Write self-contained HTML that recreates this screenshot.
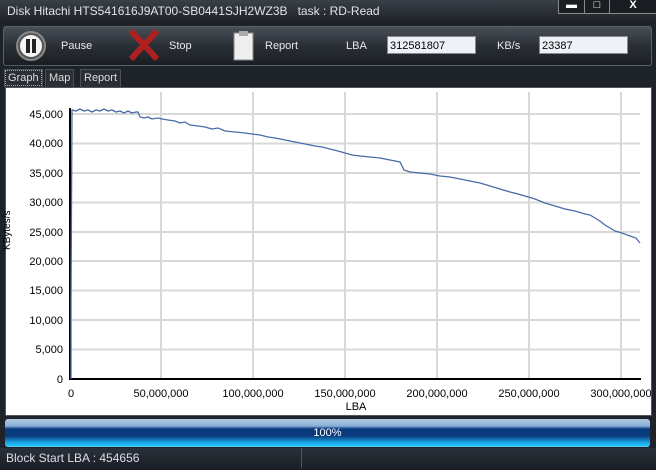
<!DOCTYPE html>
<html><head><style>
body{margin:0;width:656px;height:470px;overflow:hidden;background:#1e2329;font-family:"Liberation Sans",sans-serif;}
.title{position:absolute;left:0;top:0;width:656px;height:24px;background:linear-gradient(#3a4048,#1c2026);color:#dfe3e8;font-size:12px;}
.title span{position:absolute;left:7px;top:4px;}
.wb{position:absolute;top:-1px;height:14px;border:1px solid #888;border-top:none;background:#1a1d22;color:#fff;font-size:11px;text-align:center;line-height:12px;font-weight:bold}
.tool{position:absolute;left:3px;top:26px;width:647px;height:38px;border:1px solid #5a6068;border-radius:3px;background:linear-gradient(#4a5058,#2a2f36 50%,#1a1e24);}
.t{position:absolute;color:#e8e8e8;font-size:11px}
.inp{position:absolute;top:36px;height:18px;background:#eef2f8;border:1px solid #888;font-size:11px;line-height:18px;padding-left:2px;color:#000;box-sizing:border-box}
.tab{position:absolute;top:69px;height:17px;background:#2a2f36;border:1px solid #4a5058;color:#ddd;font-size:11px;line-height:16px;padding:0 3px;border-bottom:none}
.panel{position:absolute;left:5px;top:87px;width:645px;height:327px;background:#fff;border:1px solid #555}
.bar{position:absolute;left:5px;top:419px;width:645px;height:28px;border-radius:3px;background:linear-gradient(#b0c8e0 0%,#8ab0d8 25%,#0a3a80 35%,#0a3a7a 60%,#1aa8e8 85%,#20c0f8 95%,#6ad0f0);color:#fff;font-size:11px;text-align:center;line-height:28px}
.status{position:absolute;left:0;top:448px;width:656px;height:22px;background:linear-gradient(#2a3038,#1a1e24);color:#dde;font-size:12px}
</style></head><body>
<div class="title"><span>Disk Hitachi HTS541616J9AT00-SB0441SJH2WZ3B &nbsp; task : RD-Read</span>
<div class="wb" style="left:558px;width:25px">▬</div><div class="wb" style="left:584px;width:24px">□</div><div class="wb" style="left:609px;width:46px">X</div>
</div>
<div class="tool"></div>
<svg style="position:absolute;left:15px;top:30px" width="32" height="32"><circle cx="16" cy="16" r="14" fill="#555" stroke="#888" stroke-width="2"/><circle cx="16" cy="16" r="11" fill="#f4f4f4"/><rect x="11" y="9" width="4" height="14" fill="#222"/><rect x="17" y="9" width="4" height="14" fill="#222"/></svg>
<div class="t" style="left:61px;top:40px">Pause</div>
<svg style="position:absolute;left:128px;top:28px" width="32" height="34"><path d="M3 3 L29 31 M29 3 L3 31" stroke="#b02020" stroke-width="6"/></svg>
<div class="t" style="left:169px;top:40px">Stop</div>
<svg style="position:absolute;left:231px;top:30px" width="26" height="32"><rect x="3" y="3" width="19" height="27" fill="#eee" stroke="#888"/><rect x="8" y="1" width="9" height="5" fill="#aaa"/></svg>
<div class="t" style="left:265px;top:40px">Report</div>
<div class="t" style="left:346px;top:40px">LBA</div>
<div class="inp" style="left:387px;width:89px">312581807</div>
<div class="t" style="left:497px;top:40px">KB/s</div>
<div class="inp" style="left:539px;width:89px">23387</div>
<div class="tab" style="left:4px;outline:1px dotted #aaa;outline-offset:-2px">Graph</div>
<div class="tab" style="left:45px">Map</div>
<div class="tab" style="left:80px">Report</div>
<div class="panel"></div>
<svg style="position:absolute;left:0;top:0" width="656" height="470" font-family="Liberation Sans" font-size="11">
<g stroke="#d8d8d8" stroke-width="2">
<line x1="161" y1="92" x2="161" y2="379"/><line x1="253" y1="92" x2="253" y2="379"/><line x1="345" y1="92" x2="345" y2="379"/><line x1="437" y1="92" x2="437" y2="379"/><line x1="529" y1="92" x2="529" y2="379"/><line x1="621" y1="92" x2="621" y2="379"/>
<line x1="70" y1="114" x2="640" y2="114"/><line x1="70" y1="143.5" x2="640" y2="143.5"/><line x1="70" y1="173" x2="640" y2="173"/><line x1="70" y1="202.5" x2="640" y2="202.5"/><line x1="70" y1="232" x2="640" y2="232"/><line x1="70" y1="261" x2="640" y2="261"/><line x1="70" y1="290.5" x2="640" y2="290.5"/><line x1="70" y1="320" x2="640" y2="320"/><line x1="70" y1="349.5" x2="640" y2="349.5"/>
</g>
<line x1="70" y1="108" x2="70" y2="380" stroke="#000" stroke-width="2"/>
<line x1="69" y1="379" x2="641" y2="379" stroke="#000" stroke-width="2"/>
<g fill="#000" text-anchor="end">
<text x="63" y="118">45,000</text><text x="63" y="147">40,000</text><text x="63" y="177">35,000</text><text x="63" y="206">30,000</text><text x="63" y="236">25,000</text><text x="63" y="265">20,000</text><text x="63" y="294">15,000</text><text x="63" y="324">10,000</text><text x="63" y="353">5,000</text><text x="63" y="383">0</text>
</g>
<g fill="#000" text-anchor="middle">
<text x="71" y="397">0</text><text x="161" y="397">50,000,000</text><text x="253" y="397">100,000,000</text><text x="345" y="397">150,000,000</text><text x="437" y="397">200,000,000</text><text x="529" y="397">250,000,000</text><text x="621" y="397">300,000,000</text>
<text x="356" y="410">LBA</text>
</g>
<text x="10" y="250" font-size="10" transform="rotate(-90 10 250)" fill="#000">KBytes/s</text>
<polyline fill="none" stroke="#4a6aa8" stroke-width="1.3" points="71,379 71,300 72,110 76,111 80,109 84,111 88,110 92,112 96,110 100,111 104,109 108,111 112,110 116,112 120,111 124,113 128,111 132,113 136,112 138,112 140,117 144,118 148,117 152,119 158,118 162,119 168,120 175,121 180,123 185,122 190,125 198,126 205,127 212,129 218,128 225,131 235,132 245,133 252,134 260,135 268,137 275,138 285,140 295,142 305,144 315,146 322,147 330,149 338,151 345,153 352,155 360,156 370,157 380,158 390,160 400,162 404,170 410,172 420,173 430,174 440,176 450,177 460,179 470,181 480,183 490,186 500,189 510,192 518,194 525,196 535,199 545,203 555,206 565,209 575,211 585,214 590,215 595,218 600,221 605,225 610,228 615,231 622,233 630,236 636,238 640,243"/>
</svg>
<div class="bar">100%</div>
<div class="status"><span style="position:absolute;left:6px;top:3px">Block Start LBA : 454656</span><div style="position:absolute;left:301px;top:0;width:1px;height:20px;background:#555"></div></div>
</body></html>
